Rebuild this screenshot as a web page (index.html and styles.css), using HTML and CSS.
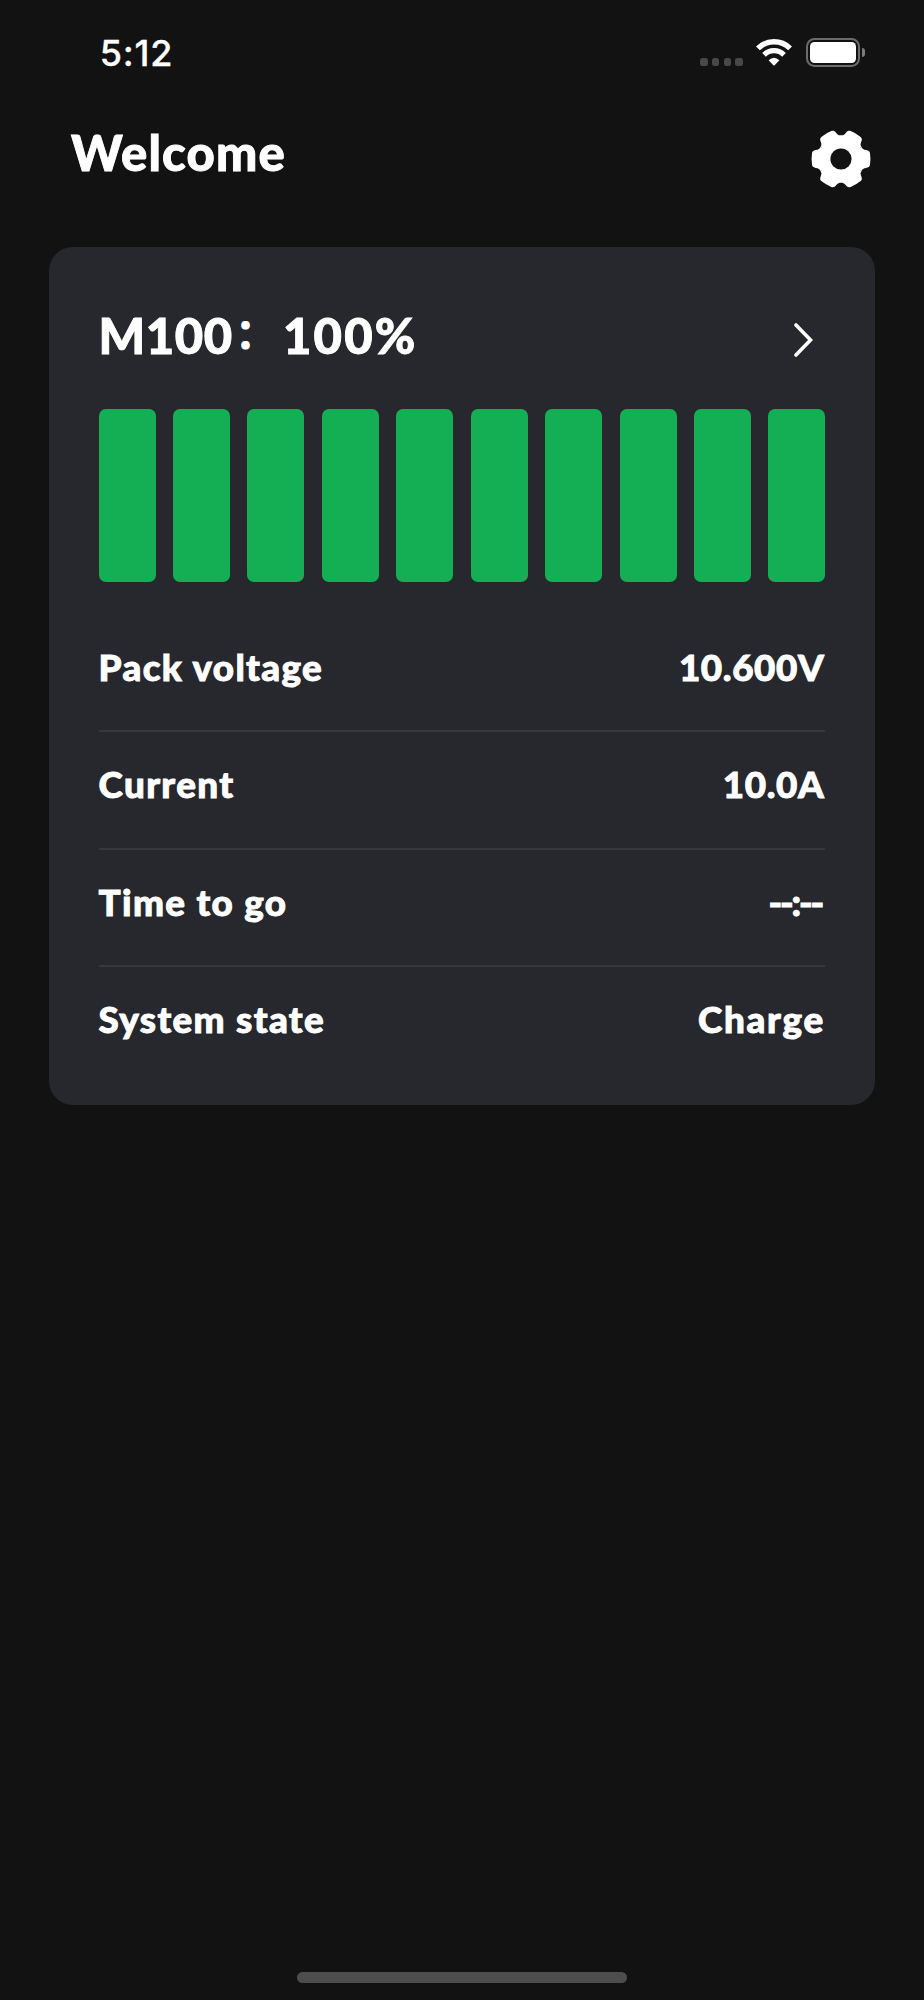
FILE: index.html
```html
<!DOCTYPE html>
<html lang="en">
<head>
    <meta charset="UTF-8">
    <meta name="viewport" content="width=device-width, initial-scale=1.0">
    <title>Battery Monitor</title>
    <link rel="stylesheet" href="styles.css">
</head>
<body>
    <div class="screen">
        <div class="status-bar">
            <div class="clock">5:12</div>
            <div class="status-icons">
                <div class="signal">
                    <span></span>
                    <span></span>
                    <span></span>
                    <span></span>
                </div>
                <svg class="wifi" viewBox="0 0 36 27">
                    <path d="M1.9 9.4A23 23 0 0 1 34.1 9.4" fill="none" stroke="#fff" stroke-width="5.5"/>
                    <path d="M8 15.8A14.3 14.3 0 0 1 28 15.8" fill="none" stroke="#fff" stroke-width="5.2"/>
                    <path d="M12.6 21.3Q18 16.2 23.4 21.3L18.6 26.2Q18 26.8 17.4 26.2Z" fill="#fff"/>
                </svg>
                <div class="battery">
                    <div class="battery-body"><div class="battery-fill"></div></div>
                    <div class="battery-cap"></div>
                </div>
            </div>
        </div>

        <div class="header">
            <h1>Welcome</h1>
            <svg class="gear" viewBox="-30 -30 60 60" fill="#fff">
                <defs>
                    <path id="tooth" d="M0 0L20.6 -11.9C21.2 -10 22.6 -9.3 25.3 -8.9C28 -8.5 28.7 -7.4 29 -5.6Q29.9 0 29 5.6C28.7 7.4 28 8.5 25.3 8.9C22.6 9.3 21.2 10 20.6 11.9Z"/>
                </defs>
                <circle r="22.5"/>
                <use href="#tooth"/>
                <use href="#tooth" transform="rotate(60)"/>
                <use href="#tooth" transform="rotate(120)"/>
                <use href="#tooth" transform="rotate(180)"/>
                <use href="#tooth" transform="rotate(240)"/>
                <use href="#tooth" transform="rotate(300)"/>
                <circle r="10.6" fill="#121212"/>
            </svg>
        </div>

        <div class="card">
            <div class="card-header">
                <h2><span class="model">M100</span><span class="colon" lang="zh-CN">：</span><span class="percent">100%</span></h2>
                <svg class="chevron" viewBox="0 0 19 34">
                    <path d="M2 2L16.5 17L2 32" fill="none" stroke="#fff" stroke-width="3.6" stroke-linecap="round"/>
                </svg>
            </div>

            <div class="level">
                <span></span>
                <span></span>
                <span></span>
                <span></span>
                <span></span>
                <span></span>
                <span></span>
                <span></span>
                <span></span>
                <span></span>
            </div>

            <div class="row">
                <span class="label">Pack voltage</span>
                <span class="value number">10.600V</span>
            </div>
            <div class="row">
                <span class="label">Current</span>
                <span class="value number">10.0A</span>
            </div>
            <div class="row">
                <span class="label">Time to go</span>
                <span class="value empty">--:--</span>
            </div>
            <div class="row">
                <span class="label">System state</span>
                <span class="value state">Charge</span>
            </div>
        </div>

        <div class="home-indicator"></div>
    </div>
</body>
</html>
```
FILE: styles.css
```css
* {
    margin: 0;
    padding: 0;
    box-sizing: border-box;
}

body {
    font-family: Lato, "Noto Sans CJK SC", sans-serif;
    font-weight: 900;
    background: #121212;
    color: #fff;
    -webkit-text-stroke: 0.9px #fff;
}

.screen {
    display: flex;
    flex-direction: column;
    height: 2000px;
    padding: 30px 49.3px 17.5px;
}

/* Status bar */
.status-bar {
    display: flex;
    justify-content: space-between;
    height: 45px;
    padding: 0 9.5px 0 50.5px;
}

.clock {
    font-family: Inter, sans-serif;
    font-weight: 500;
    font-size: 36px;
    line-height: 46px;
    letter-spacing: 0.8px;
    -webkit-text-stroke: 0.3px #fff;
}

.status-icons {
    display: flex;
    align-items: center;
    height: 45px;
}

.signal {
    display: flex;
    gap: 4.2px;
    margin: 19px 13.5px 0 0;
}

.signal span {
    width: 7.5px;
    height: 8px;
    border-radius: 2.5px;
    background: #484848;
}

.wifi {
    width: 36px;
    height: 27px;
    margin-right: 14px;
}

.battery {
    display: flex;
    align-items: center;
    gap: 2px;
}

.battery-body {
    width: 54px;
    height: 28.5px;
    padding: 2.2px;
    border: 2px solid #6c6c6c;
    border-radius: 8.5px;
}

.battery-fill {
    height: 100%;
    border-radius: 4.5px;
    background: #fff;
}

.battery-cap {
    width: 3px;
    height: 9px;
    border-radius: 0 4px 4px 0;
    background: #7a7a7a;
}

/* Header */
.header {
    display: flex;
    justify-content: space-between;
    height: 172px;
    padding: 47px 4.2px 0 21.7px;
}

h1 {
    font-size: 49px;
    font-weight: 900;
    line-height: 60px;
    letter-spacing: 1.2px;
}

.gear {
    width: 60px;
    height: 60px;
    margin-top: 6.7px;
}

/* Battery card */
.card {
    height: 858px;
    padding: 57.7px 49.3px 0;
    border-radius: 24px;
    background: #27282d;
}

.card-header {
    display: flex;
    justify-content: space-between;
    height: 104.8px;
}

h2 {
    display: flex;
    font-size: 49px;
    font-weight: 900;
    line-height: 60px;
}

.model {
    letter-spacing: 0.6px;
}

.colon {
    width: 50px;
    padding-left: 2.5px;
    font-size: 40px;
    font-weight: 700;
    line-height: 57px;
}

.percent {
    letter-spacing: 2.2px;
}

.chevron {
    width: 19px;
    height: 34px;
    margin: 18.5px 12px 0 0;
}

.level {
    display: flex;
    gap: 17.4px;
    height: 173px;
    margin-bottom: 32px;
}

.level span {
    flex: 1;
    border-radius: 7px;
    background: #14af54;
}

.row {
    display: flex;
    justify-content: space-between;
    height: 117.6px;
    padding-top: 32.2px;
    border-bottom: 2px solid #37383b;
    font-size: 36.8px;
    line-height: 40px;
    letter-spacing: 1.35px;
}

.row:last-child {
    border-bottom: none;
}

.value {
    margin-right: 0.6px;
}

.number {
    margin-right: 1px;
    letter-spacing: 0.6px;
}

.empty {
    margin-right: 3.4px;
    letter-spacing: -2.2px;
}

.state {
    letter-spacing: 1.7px;
}

.home-indicator {
    width: 330px;
    height: 11px;
    margin: auto auto 0;
    border-radius: 6px;
    background: #4d4d4d;
}
```
